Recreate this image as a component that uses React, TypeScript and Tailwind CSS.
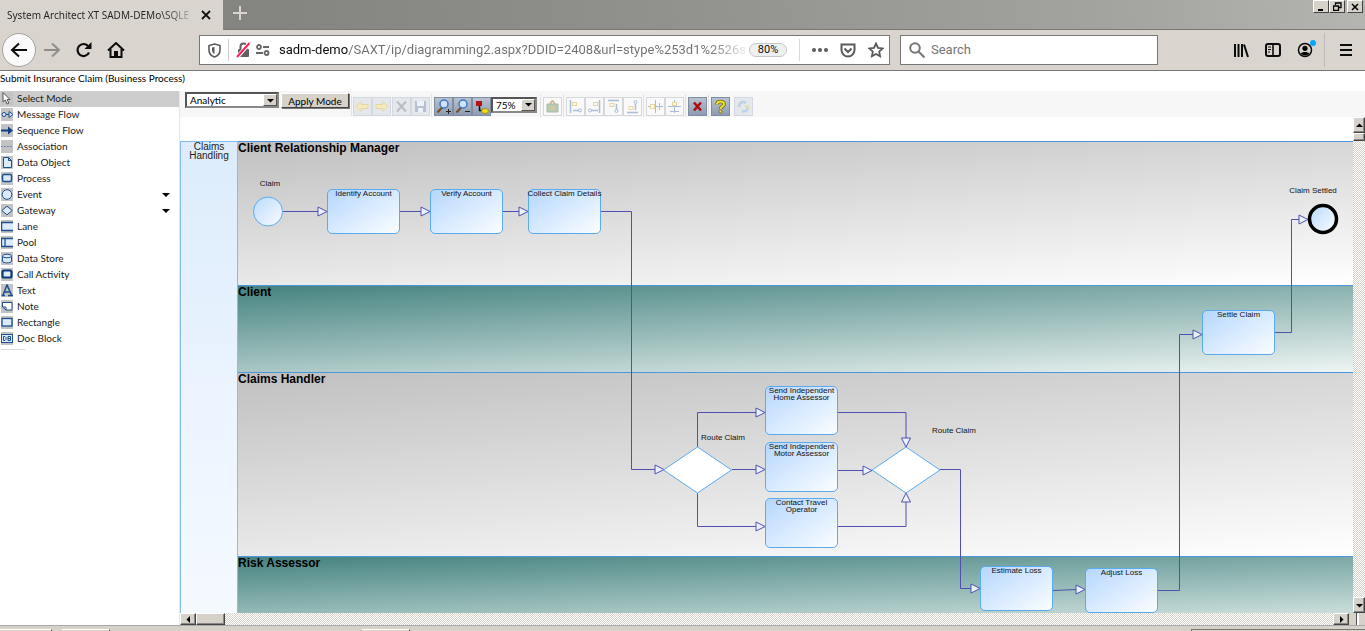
import { useState } from 'react';
import type { ReactNode } from 'react';

// --- TOOL PALETTE ---
const TOOLS = [
  'Select Mode', 'Message Flow', 'Sequence Flow', 'Association', 'Data Object', 'Process', 'Event', 'Gateway',
  'Lane', 'Pool', 'Data Store', 'Call Activity', 'Text', 'Note', 'Rectangle', 'Doc Block',
];

const N = '#1d4f91';
const L = '#dcebfb';

const TOOL_ART: Record<string, ReactNode> = {
  'Select Mode': <path d="M2 0.5V10l2.3-2 1.7 4 1.8-.8-1.7-3.7H9z" fill="#fff" stroke="#555" />,
  'Message Flow': <><path d="M5 6.5h3" stroke={N} /><circle cx="3" cy="6.5" r="2" fill={L} stroke={N} /><path d="M8 3.5v6l4-3z" fill={L} stroke={N} /></>,
  'Sequence Flow': <path d="M0 5.5h7V2.500l5 4-5 4V7.500H0z" fill="#123f86" />,
  Association: <path d="M0 6.5h12" stroke="#6e86b3" strokeDasharray="2 1" />,
  'Data Object': <path d="M2.5 1.5h5l3 3v7h-8zM7.5 1.5v3h3" fill={L} stroke={N} />,
  Process: <rect x="1.5" y="2.5" width="9" height="7" rx="1.5" fill={L} stroke={N} strokeWidth="1.5" />,
  Event: <circle cx="6" cy="6.5" r="4.8" fill={L} stroke={N} />,
  Gateway: <path d="M6 2.2l5.2 4.3L6 10.8.8 6.5z" fill={L} stroke={N} />,
  Lane: <><rect x="0" y="2" width="12" height="9" fill={L} /><path d="M12 2.5H.5v8H12" fill="none" stroke={N} strokeWidth="1.5" /></>,
  Pool: <><rect x="0" y="2" width="12" height="9" fill={L} /><path d="M12 2.5H.5v8H12M4 2.5v8" fill="none" stroke={N} strokeWidth="1.3" /></>,
  'Data Store': <><path d="M1.5 4v5c0 2.5 9 2.5 9 0V4" fill={L} stroke={N} /><ellipse cx="6" cy="4" rx="4.5" ry="1.8" fill={L} stroke={N} /></>,
  'Call Activity': <rect x="1.5" y="2.5" width="9" height="7" rx="1.5" fill={L} stroke="#0d3a80" strokeWidth="2.2" />,
  Text: <path d="M.5 11.5h3.5M7 11.5h5M2 11L6 1l4.5 10M3.5 8h5" fill="none" stroke={N} strokeWidth="1.5" />,
  Note: <path d="M1.5 2.5h9.5v7.5H5l-3.5-3zM1.5 7H5v3" fill="#fff" stroke={N} />,
  Rectangle: <rect x="1" y="2.5" width="10" height="7.5" fill={L} stroke={N} strokeWidth="1.3" />,
  'Doc Block': <><rect x="0.5" y="2.5" width="11" height="8" fill={L} stroke={N} /><path d="M2.5 4.5h1.5l1 1v2l-1 1H2.500zM7 4.500h2.500v4H7zM7 6.500h2.500" fill="none" stroke={N} /></>,
};

// --- DIAGRAM DATA (canvas coordinates) ---
const LANES = [
  { name: 'Client Relationship Manager', className: 'h-36 bg-[linear-gradient(176deg,#c0c0c0,#ffffff)]' },
  { name: 'Client', className: 'h-[87px] bg-[linear-gradient(177deg,#458380,#eef5f3)]' },
  { name: 'Claims Handler', className: 'h-46 bg-[linear-gradient(175deg,#c0c0c0,#ffffff)]' },
  { name: 'Risk Assessor', className: 'flex-1 bg-[linear-gradient(178deg,#458380,#cadedb)]' },
];

const NODES = [
  { text: 'Identify Account', x: 147, y: 48, h: 45 },
  { text: 'Verify Account', x: 250, y: 48, h: 45 },
  { text: 'Collect Claim Details', x: 348, y: 48, h: 45 },
  { text: 'Settle Claim', x: 1022, y: 169, h: 45 },
  { text: 'Send Independent Home Assessor', x: 585, y: 245, h: 49 },
  { text: 'Send Independent Motor Assessor', x: 585, y: 301, h: 50 },
  { text: 'Contact Travel Operator', x: 585, y: 357, h: 50 },
  { text: 'Estimate Loss', x: 800, y: 425, h: 45 },
  { text: 'Adjust Loss', x: 905, y: 427, h: 45 },
];

const LABELS = [
  { text: 'Claim', x: 90, y: 39 },
  { text: 'Claim Settled', x: 1133, y: 46 },
  { text: 'Route Claim', x: 543, y: 293 },
  { text: 'Route Claim', x: 774, y: 286 },
];

const FLOWS = [
  'M103 70.5H138', 'M220 70.5H241', 'M323 70.5H339', 'M420 70.5H451.5V328.5H475',
  'M552 328.5H577', 'M517.5 306V271.5H577', 'M517.5 352V385.5H577',
  'M658 271.5H726V298', 'M658 329.5H683', 'M658 385.5H726V360',
  'M760 328.5H780.5V447.5H792', 'M873 449.500L897 448.500', 'M978 449.500H999.500V193.500H1013',
  'M1095 191.500H1111.500V78.500H1119',
];

const ARROWS: [number, number, number][] = [
  [147, 70.5, 0], [250, 70.5, 0], [348, 70.5, 0], [484, 328.5, 0],
  [585, 328.5, 0], [585, 271.5, 0], [585, 385.5, 0], [692, 329.5, 0],
  [726, 306, 90], [726, 352, -90], [800, 447.5, 0], [905, 448.5, 0], [1022, 193.5, 0], [1128, 78.5, 0],
];

// --- SMALL PARTS ---
function Caret({ dir }: { dir: 'up' | 'down' | 'left' | 'right' }) {
  const paths = { up: 'M0 5h7L3.500 1.500z', down: 'M0 2h7L3.500 5.500z', left: 'M5 0v7L1.500 3.500z', right: 'M2 0v7L5.500 3.500z' };
  return (
    <svg width="7" height="7" viewBox="0 0 7 7" aria-hidden="true">
      <path d={paths[dir]} fill="#000" />
    </svg>
  );
}

function Picker({ label, options, className }: { label: string; options: string[]; className: string }) {
  const [value, setValue] = useState(options[0]);
  return (
    <div className={`relative shrink-0 border-2 border-t-[#555] border-l-[#555] border-r-[#888] border-b-[#888] bg-white ${className}`}>
      <select
        aria-label={label}
        value={value}
        onChange={(e) => setValue(e.target.value)}
        className="block h-full w-full appearance-none bg-transparent pl-[3px] leading-3 outline-none"
      >
        {options.map((o) => <option key={o}>{o}</option>)}
      </select>
      <span className="pointer-events-none absolute inset-y-0 right-0 flex w-[14px] items-center justify-center border border-t-white border-l-white border-r-[#555] border-b-[#555] bg-[#d6d2ca]">
        <Caret dir="down" />
      </span>
    </div>
  );
}

function ToolButton({ label, kind, children }: { label: string; kind: 'solid' | 'faded' | 'outline'; children: ReactNode }) {
  const styles = {
    solid: 'border-[#7f8da3] bg-linear-to-b from-[#b9c2d0] to-[#8e9bb0]',
    faded: 'border-[#d3d8e0] bg-[#e4e7ec]',
    outline: 'border-[#d4d8dd] bg-[#f9f9f9]',
  };
  return (
    <button aria-label={label} title={label} className={`flex h-[19px] w-[19px] shrink-0 items-center justify-center border ${styles[kind]}`}>
      <svg width="17" height="17" viewBox="0 0 17 17" fill="none" aria-hidden="true">{children}</svg>
    </button>
  );
}

const Separator = () => <div className="mr-[2px] ml-px h-6 w-px shrink-0 bg-[#e2e2e2]" />;

function ZoomArt({ sign }: { sign: string }) {
  return (
    <>
      <path d="M7.500 9L2.500 14.500" stroke="#7a4a20" strokeWidth="2" />
      <circle cx="9" cy="6" r="4" fill="#cfe4fb" stroke="#3f78c6" strokeWidth="1.5" />
      <path d={sign} stroke="#222" />
    </>
  );
}

// --- BROWSER CHROME ---
function BrowserChrome() {
  const winButton = 'flex h-[13px] w-4 items-center justify-center border border-t-white border-l-white border-r-[#444] border-b-[#444] bg-[#d6d2ca]';
  return (
    <header className="shrink-0 font-['Roboto',sans-serif] text-[#222]">
      <div className="flex h-[30px] bg-[linear-gradient(85deg,#848480_20%,#8f8f8c_45%,#a2a29f_80%,#b4b4b0_100%)]">
        <div className="flex w-[223px] items-center justify-between bg-[#d9d5ce] pr-[12px] pl-[7px]">
          <span className="bg-linear-to-r from-[#222] from-85% to-[#aaa] bg-clip-text font-['Noto_Sans',sans-serif] text-[10px] whitespace-nowrap text-transparent">
            System Architect XT SADM-DEMo\SQLE
          </span>
          <button aria-label="Close tab">
            <svg width="10" height="10" viewBox="0 0 10 10"><path d="M1 1l8 8M9 1L1 9" stroke="#111" strokeWidth="1.8" /></svg>
          </button>
        </div>
        <div className="flex flex-1 items-start border-b border-[#777773]">
          <button aria-label="New tab" className="ml-[10px] pt-[6px]">
            <svg width="14" height="14" viewBox="0 0 14 14"><path d="M7 0v14M0 7h14" stroke="#d9d5ce" strokeWidth="2" /></svg>
          </button>
          <div className="ml-auto flex items-start pr-[2px]">
            <button aria-label="Minimize" className={winButton}><svg width="8" height="9"><path d="M1 8h5" stroke="#000" strokeWidth="2" /></svg></button>
            <button aria-label="Restore" className={winButton}><svg width="9" height="9" fill="none" stroke="#000"><path d="M2.500 3V1h5.500v4.500h-2M.5 4h5v4.500h-5z" strokeWidth="1.300" /></svg></button>
            <button aria-label="Close" className={`ml-[2px] ${winButton}`}><svg width="8" height="8"><path d="M1 1l6 6M7 1L1 7" stroke="#000" strokeWidth="1.500" /></svg></button>
          </div>
        </div>
      </div>

      <div className="flex h-[41px] items-center border-b border-[#777] bg-[#d9d5ce]">
        <div className="flex items-center gap-[14px] pl-[2px]">
          <button aria-label="Back" className="flex h-[34px] w-[34px] items-center justify-center rounded-full border border-[#a5a29d] bg-[#fafafa]">
            <svg width="18" height="16" viewBox="0 0 18 16" fill="none" stroke="#0c0c0d" strokeWidth="2"><path d="M17 8H2M9 1.500L2 8l7 6.500" /></svg>
          </button>
          <button aria-label="Forward" className="-ml-[7px]">
            <svg width="18" height="16" viewBox="0 0 18 16" fill="none" stroke="#8f8d89" strokeWidth="2"><path d="M1 8h15M9 1.500L16 8l-7 6.500" /></svg>
          </button>
          <button aria-label="Reload">
            <svg width="18" height="16" viewBox="0 0 18 16" fill="none" stroke="#0c0c0d" strokeWidth="2.200"><path d="M14 10.500A6 6 0 1 1 13 4" /><path d="M16.500 0v7H9.500z" fill="#0c0c0d" stroke="none" /></svg>
          </button>
          <button aria-label="Home">
            <svg width="18" height="16" viewBox="0 0 18 16"><path d="M1 8.500L9 1l8 7.500M3.500 7v8h11V7" fill="none" stroke="#0c0c0d" strokeWidth="2" /><path d="M7 15V9h4v6z" fill="#0c0c0d" /></svg>
          </button>
        </div>

        <div className="ml-[74px] flex h-[30px] w-[691px] shrink items-center border border-[#777] bg-white pr-[5px] pl-[8px]">
          <svg width="13" height="15" viewBox="0 0 13 15" fill="none" stroke="#5a5a5a" strokeWidth="1.600" aria-hidden="true"><path d="M6.500 1L12 2.500V7c0 3.500-2.500 6-5.500 7C3.500 13 1 10.500 1 7V2.500z" /><path d="M6.500 4v7C4.500 10 4 8.500 4 7V4.600z" fill="#5a5a5a" stroke="none" /></svg>
          <div className="mx-[7px] h-[22px] w-px bg-[#d0cdc6]" />
          <svg width="15" height="16" viewBox="0 0 15 16" fill="none" aria-hidden="true"><rect x="2" y="7" width="11" height="8" rx="1" fill="#5f5f5f" /><path d="M4.500 7V4.500a3 3 0 0 1 6 0V7" stroke="#5f5f5f" strokeWidth="2" /><path d="M1.500 15L13.500 1" stroke="#fff" strokeWidth="4" /><path d="M1 15L13.500 1" stroke="#ff1f57" strokeWidth="2" /></svg>
          <svg className="ml-[5px]" width="14" height="12" viewBox="0 0 14 12" fill="none" stroke="#666" strokeWidth="1.800" aria-hidden="true"><circle cx="3" cy="3" r="2" /><path d="M7 3h6M0 9h7" /><circle cx="10.500" cy="9" r="2" /></svg>
          <input
            aria-label="Address"
            defaultValue="sadm-demo/SAXT/ip/diagramming2.aspx?DDID=2408&url=stype%253d1%2526s"
            className="ml-[9px] min-w-0 flex-1 bg-[linear-gradient(90deg,#0c0c0d_69px,#6f6f6f_69px,#6f6f6f_92%,#f0f0f0_100%)] bg-clip-text text-[13px] text-transparent outline-none"
          />
          <button className="ml-[2px] h-[14px] w-[38px] rounded-full border border-[#c8c8c8] bg-[#eff0f0] text-[11px] leading-3 text-[#0c0c0d]">80%</button>
          <div className="mr-[12px] ml-[12px] h-[22px] w-px bg-[#d8d8d8]" />
          <button aria-label="Page actions"><svg width="16" height="6" viewBox="0 0 16 6" fill="#5a5a5a"><circle cx="2" cy="3" r="2" /><circle cx="8" cy="3" r="2" /><circle cx="14" cy="3" r="2" /></svg></button>
          <button aria-label="Save to Pocket" className="ml-[12px]"><svg width="16" height="15" viewBox="0 0 16 15" fill="none" stroke="#5a5a5a" strokeWidth="2"><path d="M1.500 1.500h13V7a6.500 6.500 0 0 1-13 0z" /><path d="M4.500 5.500L8 9l3.500-3.500" /></svg></button>
          <button aria-label="Bookmark" className="ml-[12px]"><svg width="16" height="16" viewBox="0 0 16 16" fill="none" stroke="#5a5a5a" strokeWidth="1.800"><path d="M8 1.500l2 4.300 4.700.6-3.500 3.200.9 4.700L8 12l-4.100 2.300.9-4.700L1.300 6.400 6 5.800z" /></svg></button>
        </div>

        <label className="ml-[10px] flex h-[30px] w-[258px] shrink items-center border border-[#777] bg-white pl-[8px]">
          <svg width="16" height="16" viewBox="0 0 16 16" fill="none" stroke="#777" strokeWidth="2" aria-hidden="true"><circle cx="6" cy="6" r="4.800" /><path d="M9.500 9.500l6 6" /></svg>
          <input aria-label="Search" placeholder="Search" className="ml-[6px] min-w-0 flex-1 text-[13px] outline-none placeholder:text-[#757575]" />
        </label>

        <div className="ml-auto flex items-center gap-[16px] pr-[13px]">
          <button aria-label="Library"><svg width="16" height="15" viewBox="0 0 16 15" stroke="#0c0c0d" strokeWidth="2"><path d="M2 1v13M5.500 1v13M9 1v13M11 1.500l4 12.500" /></svg></button>
          <button aria-label="Sidebars"><svg width="16" height="14" viewBox="0 0 16 14" fill="none" stroke="#0c0c0d"><rect x="1" y="1" width="14" height="12" rx="2" strokeWidth="2" /><path d="M8 1v12" strokeWidth="1.600" /><path d="M3 4h3M3 6.500h3M3 9h2" /></svg></button>
          <button aria-label="Account" className="relative">
            <svg width="16" height="16" viewBox="0 0 16 16"><circle cx="8" cy="8" r="6.500" fill="none" stroke="#0c0c0d" strokeWidth="1.500" /><circle cx="8" cy="6.300" r="2.600" /><path d="M3.800 11.500c1-2 7.400-2 8.400 0-2 2.500-6.400 2.500-8.400 0z" /></svg>
            <span className="absolute -top-[2px] -right-[3px] h-[6px] w-[6px] rounded-full bg-[#0aa5ff]" />
          </button>
          <div className="-ml-[5px] h-[34px] w-px bg-[#bfbbb4]" />
          <button aria-label="Open menu" className="-ml-px"><svg width="12" height="12" viewBox="0 0 12 12" stroke="#0c0c0d" strokeWidth="2"><path d="M0 1h12M0 6h12M0 11h12" /></svg></button>
        </div>
      </div>
    </header>
  );
}

// --- PALETTE ---
function Palette() {
  const [active, setActive] = useState('Select Mode');
  return (
    <nav aria-label="Palette" className="w-[180px] shrink-0 border-r border-[#e6e6e6]">
      {TOOLS.map((tool) => (
        <button
          key={tool}
          onClick={() => setActive(tool)}
          className={`flex h-4 w-full items-start pl-px text-left leading-[14px] text-[#1a1a1a] ${tool === active ? 'bg-[#cccccc]' : ''}`}
        >
          <svg width="12" height="13" viewBox="0 0 12 13" className="mt-px shrink-0 bg-[#c3c3c3]" aria-hidden="true">{TOOL_ART[tool]}</svg>
          <span className="ml-1 flex-1">{tool}</span>
          {(tool === 'Event' || tool === 'Gateway') && (
            <svg width="8" height="4" viewBox="0 0 8 4" className="mr-[9px] self-center" aria-hidden="true"><path d="M0 0h8L4 4z" /></svg>
          )}
        </button>
      ))}
      <div className="mt-[2px] ml-px h-px w-6 bg-[#dcdcdc]" />
    </nav>
  );
}

// --- TOOLBAR ---
function Toolbar() {
  const y = '#e8d79a';
  const s = '#a9bdd6';
  return (
    <div className="flex h-[26px] shrink-0 items-start overflow-hidden bg-[#f7f7f7] pl-[5px]">
      <Picker label="Mode" options={['Analytic', 'Draw']} className="mt-px h-[16px] w-[94px]" />
      <button className="mt-[2px] ml-[2px] h-[15px] w-[68px] border border-t-white border-l-white border-r-[#444] border-b-[#444] bg-[#d6d2ca] leading-3 whitespace-nowrap shadow-[1px_1px_0_#777]">
        Apply Mode
      </button>
      <div className="flex items-center pt-[3px]">
        <div className="mr-px ml-[2px] h-5 w-px bg-[#e2e2e2]" />
        <ToolButton label="Undo" kind="faded"><path d="M2 8.500l5-5v3h7v4H7v3z" fill="#f5e9c0" stroke={y} /></ToolButton>
        <ToolButton label="Redo" kind="faded"><path d="M15 8.500l-5-5v3H3v4h7v3z" fill="#f5e9c0" stroke={y} /></ToolButton>
        <div className="ml-px flex">
          <ToolButton label="Delete" kind="faded"><path d="M4 3.500l9 10M13 3.500l-9 10" stroke="#b9bcc2" strokeWidth="2" /></ToolButton>
          <ToolButton label="Save" kind="faded"><path d="M3 3h11v11H3z" fill="#b5c0d3" /><path d="M5 3h7v5H5zM6 10h5v4H6z" fill="#eef1f6" /></ToolButton>
        </div>
        <Separator />
        <ToolButton label="Zoom in" kind="solid"><ZoomArt sign="M11 13.500h5M13.500 11v5" /></ToolButton>
        <ToolButton label="Zoom out" kind="solid"><ZoomArt sign="M11 13.500h5" /></ToolButton>
        <ToolButton label="Navigator" kind="solid"><path d="M3 3h6v5H3z" fill="#b31217" /><path d="M6.500 8v4.500H10" stroke="#111" strokeWidth="1.500" /><ellipse cx="12" cy="13" rx="3.500" ry="2.500" fill="#f2dc1e" stroke="#a08f10" /></ToolButton>
        <Picker label="Zoom level" options={['75%', '100%', '150%']} className="mr-[2px] mb-[3px] h-[16px] w-[46px]" />
        <Separator />
        <ToolButton label="Snapshot" kind="outline"><path d="M3 6h11v8H3z" fill="#b7cbb5" stroke="#a9b8a5" /><path d="M6 6l2-3h1l2 3" stroke="#c4b48a" strokeWidth="1.500" /><circle cx="8.500" cy="10" r="2" fill="#e6c88c" /></ToolButton>
        <Separator />
        <div className="flex">
          <ToolButton label="Align left" kind="outline"><path d="M3.500 2v13M6 12.500h6" stroke={s} strokeWidth="1.500" /><rect x="5.500" y="4.500" width="4" height="3" stroke={y} /><circle cx="13" cy="12.500" r="1.500" stroke={s} /></ToolButton>
          <ToolButton label="Align right" kind="outline"><path d="M13.500 2v13M5 12.500h7" stroke={s} strokeWidth="1.500" /><rect x="7.500" y="4.500" width="4" height="3" stroke={y} /><circle cx="4" cy="12.500" r="1.500" stroke={s} /></ToolButton>
          <ToolButton label="Align top" kind="outline"><path d="M3 2.500h11M11.500 6v6" stroke={s} strokeWidth="1.500" /><rect x="5" y="5.500" width="4" height="3" stroke={y} /><circle cx="11.500" cy="13" r="1.500" stroke={s} /></ToolButton>
          <ToolButton label="Align bottom" kind="outline"><path d="M3 14.500h11M11.500 6v6" stroke={s} strokeWidth="1.500" /><rect x="5" y="8.500" width="4" height="3" stroke={y} /><circle cx="11.500" cy="4" r="1.500" stroke={s} /></ToolButton>
        </div>
        <Separator />
        <ToolButton label="Center horizontally" kind="outline"><path d="M8.500 2v13M1 8.500h15M12.500 5v7" stroke={s} /><rect x="3.500" y="6.500" width="4" height="4" fill="#f9f9f9" stroke={y} /></ToolButton>
        <ToolButton label="Center vertically" kind="outline"><path d="M2 8.500h13M8.500 2v13M4 13.500h9" stroke={s} /><rect x="6.500" y="4.500" width="4" height="3" fill="#f9f9f9" stroke={y} /></ToolButton>
        <Separator />
        <ToolButton label="Close diagram" kind="solid"><path d="M5 4.500l7 8M12 4.500l-7 8" stroke="#a80f12" strokeWidth="2.600" /></ToolButton>
        <Separator />
        <ToolButton label="Help" kind="solid"><path d="M5 6.500C5 2.500 12 2.500 12 6c0 2.500-3.500 2.300-3.500 5" stroke="#6c6413" strokeWidth="3.600" /><path d="M5 6.500C5 2.500 12 2.500 12 6c0 2.500-3.500 2.300-3.500 5" stroke="#f4e426" strokeWidth="2" /><circle cx="8.500" cy="13.500" r="1.500" fill="#f4e426" stroke="#6c6413" strokeWidth="0.800" /></ToolButton>
        <div className="ml-[4px]">
          <ToolButton label="Refresh" kind="faded"><path d="M4 9c0-5 4-6 7-4M13 8c0 5-3 6-6 5" stroke="#bcd0e6" strokeWidth="2.400" /><path d="M9 8l5-1v5z" fill="#d8dfb4" /></ToolButton>
        </div>
      </div>
    </div>
  );
}

// --- CANVAS ---
function Canvas() {
  return (
    <div className="relative flex min-h-0 flex-1 overflow-hidden">
      <div className="w-[58px] shrink-0 border border-b-0 border-[#86bdf0] bg-linear-to-b from-[#dcecfb] via-[#eaf3ff] to-[#f5faff] text-center font-['Liberation_Sans',sans-serif] text-[10px] leading-[9px] text-[#222]">
        Claims Handling
      </div>
      <div className="flex min-w-0 flex-1 flex-col">
        {LANES.map((lane) => (
          <section key={lane.name} className={`shrink-0 border-t border-[#4a97de] ${lane.className}`}>
            <h2 className="font-['Liberation_Sans',sans-serif] text-[12px] leading-3 font-bold text-black">{lane.name}</h2>
          </section>
        ))}
      </div>

      <svg className="pointer-events-none absolute top-0 left-0" width="1185" height="472" fill="none" aria-hidden="true">
        <defs>
          <linearGradient id="shape" x1="0" y1="0" x2="1" y2="1">
            <stop offset="0" stopColor="#b9d9fd" />
            <stop offset="1" stopColor="#fbfdff" />
          </linearGradient>
        </defs>
        <g stroke="#5050b0" strokeWidth="1">
          {FLOWS.map((d) => <path key={d} d={d} />)}
          {ARROWS.map(([x, y, r]) => (
            <path key={`${x}-${y}`} d="M-9 -4.500V4.500L0 0z" fill="#eaf2ff" transform={`translate(${x} ${y}) rotate(${r})`} />
          ))}
        </g>
        <circle cx="88" cy="70.500" r="14.500" fill="url(#shape)" stroke="#5aaaf0" />
        <circle cx="1143" cy="78" r="13.500" fill="url(#shape)" stroke="#000" strokeWidth="3.500" />
        <path d="M483.500 329L517.500 306l34 23-34 23z" fill="#fff" stroke="#5aaaf0" />
        <path d="M692 329L726 306l34 23-34 23z" fill="#fff" stroke="#5aaaf0" />
      </svg>

      {NODES.map((n) => (
        <div
          key={n.text}
          style={{ left: n.x, top: n.y, height: n.h }}
          className="absolute w-[73px] rounded-[5px] border border-[#5aaaf0] bg-linear-to-br from-[#b5d7fd] to-[#fbfdff] text-center font-['Liberation_Sans',sans-serif] text-[8px] leading-[7px] text-[#111]"
        >
          <span className="-mx-1 block">{n.text}</span>
        </div>
      ))}
      {LABELS.map((l) => (
        <span
          key={`${l.text}-${l.x}`}
          style={{ left: l.x, top: l.y }}
          className="absolute -translate-x-1/2 font-['Liberation_Sans',sans-serif] text-[8px] leading-[8px] whitespace-nowrap text-[#111]"
        >
          {l.text}
        </span>
      ))}
    </div>
  );
}

const track = 'bg-[repeating-conic-gradient(#d6d2ca_0%_25%,#ffffff_0%_50%)] bg-size-[2px_2px]';
const bevel = 'shrink-0 flex items-center justify-center border border-t-white border-l-white border-r-[#444] border-b-[#444] bg-[#d6d2ca] shadow-[inset_-1px_-1px_0_#888]';

export default function App() {
  return (
    <div className="flex h-screen flex-col overflow-hidden bg-white font-['Lato','DejaVu_Sans',sans-serif] text-[10px] text-black">
      <BrowserChrome />
      <h1 className="h-5 shrink-0 leading-[14px]">Submit Insurance Claim (Business Process)</h1>
      <main className="flex min-h-0 flex-1">
        <Palette />
        <div className="flex min-w-0 flex-1 flex-col">
          <Toolbar />
          <div className="flex min-h-0 flex-1">
            <div className="flex min-w-0 flex-1 flex-col pt-6">
              <Canvas />
            </div>
            <div className={`flex w-3 flex-col ${track}`}>
              <button aria-label="Scroll up" className={`h-4 ${bevel}`}><Caret dir="up" /></button>
              <div className={`h-2 ${bevel}`} />
              <button aria-label="Scroll down" className={`mt-auto h-4 ${bevel}`}><Caret dir="down" /></button>
            </div>
          </div>
          <div className="flex h-3 shrink-0">
            <button aria-label="Scroll left" className={`w-4 ${bevel}`}><Caret dir="left" /></button>
            <div className={`w-[29px] ${bevel}`} />
            <div className={`flex-1 ${track}`} />
            <button aria-label="Scroll right" className={`w-4 ${bevel}`}><Caret dir="right" /></button>
            <div className="flex w-4 justify-center bg-[#d6d2ca]"><div className="w-[3px] border-l border-[#555] bg-white" /></div>
          </div>
        </div>
      </main>
      <footer className="flex h-[6px] shrink-0 items-end border-t border-[#aaa] bg-[#d6d2ca]">
        <div className="h-[2px] w-[52px] border-t border-r border-t-white border-r-[#444]" />
        <div className="ml-[10px] h-[2px] w-[48px] border-t border-r border-t-white border-r-[#444]" />
        <div className="ml-[252px] h-[2px] w-[48px] border-t border-r border-t-white border-r-[#444]" />
        <div className="ml-auto h-[2px] w-[174px] border-t border-l border-[#777]" />
      </footer>
    </div>
  );
}
